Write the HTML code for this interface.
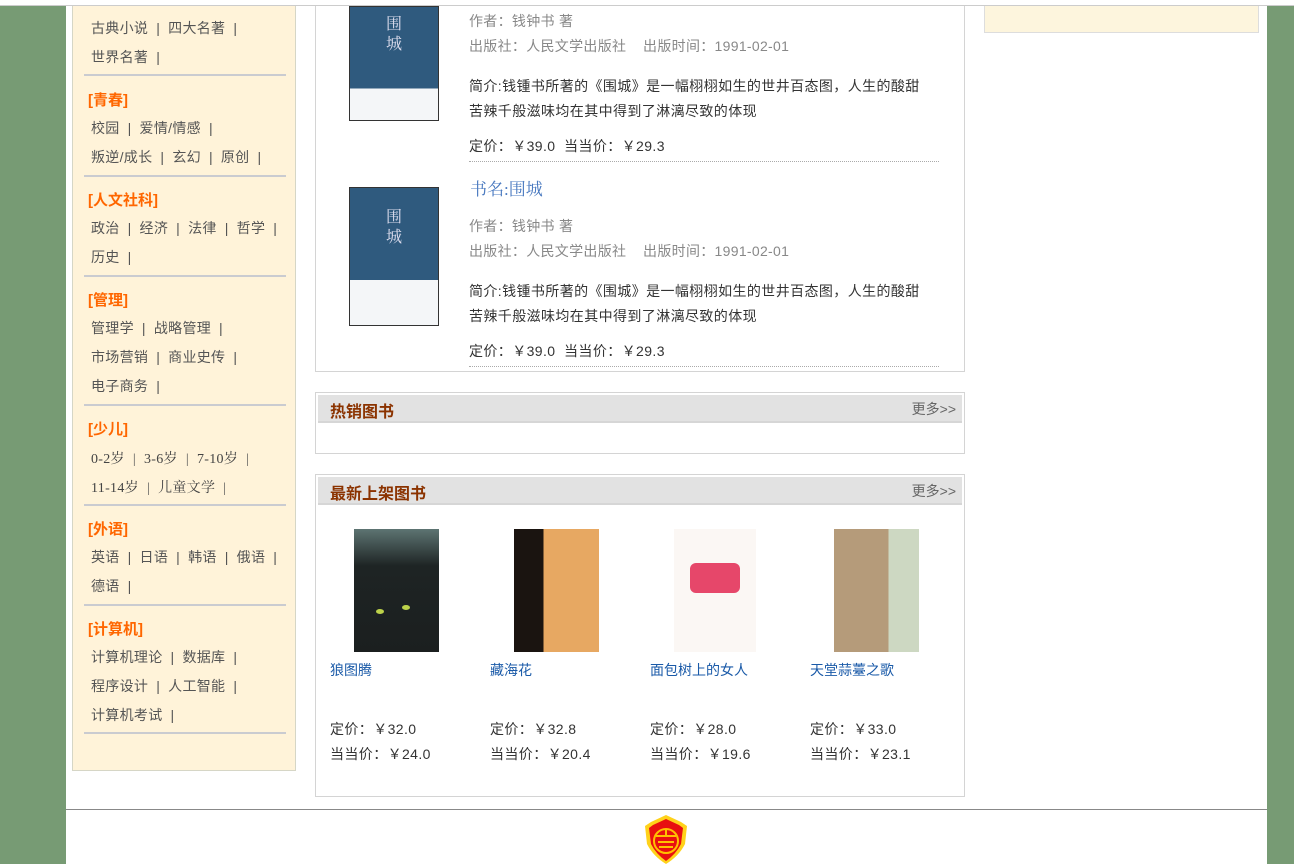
<!DOCTYPE html>
<html><head><meta charset="utf-8">
<style>
*{margin:0;padding:0;box-sizing:border-box}
body{width:1294px;height:864px;overflow:hidden;background:#779b74;font-family:"Liberation Sans","Noto Sans CJK SC",sans-serif;position:relative;font-size:14px;color:#333}
.a{position:absolute}
.topw{left:0;top:0;width:1294px;height:6px;background:#fff;border-bottom:1px solid #ccc}
.main{left:66px;top:5px;width:1201px;height:805px;background:#fff}
.side{left:72px;top:0;width:224px;height:771px;background:#fff3d9;border:1px solid #d6d6c6;border-top:none}
.sep{position:absolute;left:11px;width:202px;height:2px;background:#cacbd0}
.hd{position:absolute;left:15px;color:#f60;font-weight:bold;font-size:15px}
.ln{position:absolute;left:18px;color:#555;font-size:14px;white-space:nowrap;letter-spacing:0.3px}
.ln i{font-style:normal;color:#555;margin:0 8px}
.latin{font-family:"Liberation Serif","Noto Serif CJK SC",serif}
.box{border:1px solid #d4d4d4;background:#fff}
.bar{position:absolute;left:2px;right:2px;top:2px;height:28px;background:#e2e2e2;border-bottom:2px solid #d6d6d6}
.bar b{position:absolute;left:12px;top:3px;color:#8b3300;font-size:16px}
.bar span{position:absolute;right:6px;top:4px;color:#666;font-size:14px}
.cover{background:#2f5a7e;border:1px solid #333}
.g{color:#888;font-size:14px;letter-spacing:0.3px}
.p{font-size:14px;color:#333;letter-spacing:0.4px}
.blue{color:#1a5aa8}
</style></head><body>
<div class="a main"></div>
<div class="a topw"></div>
<div class="a side" style="top:6px;height:765px">
 <div class="ln" style="top:12px">古典小说<i>|</i>四大名著<i>|</i></div>
 <div class="ln" style="top:41px">世界名著<i>|</i></div>
 <div class="sep" style="top:68px"></div>
 <div class="hd" style="top:83px">[青春]</div>
 <div class="ln" style="top:112px">校园<i>|</i>爱情/情感<i>|</i></div>
 <div class="ln" style="top:141px">叛逆/成长<i>|</i>玄幻<i>|</i>原创<i>|</i></div>
 <div class="sep" style="top:169px"></div>
 <div class="hd" style="top:183px">[人文社科]</div>
 <div class="ln" style="top:212px">政治<i>|</i>经济<i>|</i>法律<i>|</i>哲学<i>|</i></div>
 <div class="ln" style="top:241px">历史<i>|</i></div>
 <div class="sep" style="top:269px"></div>
 <div class="hd" style="top:283px">[管理]</div>
 <div class="ln" style="top:312px">管理学<i>|</i>战略管理<i>|</i></div>
 <div class="ln" style="top:341px">市场营销<i>|</i>商业史传<i>|</i></div>
 <div class="ln" style="top:370px">电子商务<i>|</i></div>
 <div class="sep" style="top:398px"></div>
 <div class="hd" style="top:412px">[少儿]</div>
 <div class="ln latin" style="top:442px;color:#444">0-2岁<i>|</i>3-6岁<i>|</i>7-10岁<i>|</i></div>
 <div class="ln latin" style="top:471px;color:#444">11-14岁<i>|</i>儿童文学<i>|</i></div>
 <div class="sep" style="top:498px"></div>
 <div class="hd" style="top:512px">[外语]</div>
 <div class="ln" style="top:541px">英语<i>|</i>日语<i>|</i>韩语<i>|</i>俄语<i>|</i></div>
 <div class="ln" style="top:570px">德语<i>|</i></div>
 <div class="sep" style="top:598px"></div>
 <div class="hd" style="top:612px">[计算机]</div>
 <div class="ln" style="top:641px">计算机理论<i>|</i>数据库<i>|</i></div>
 <div class="ln" style="top:670px">程序设计<i>|</i>人工智能<i>|</i></div>
 <div class="ln" style="top:699px">计算机考试<i>|</i></div>
 <div class="sep" style="top:726px"></div>
</div>

<div class="a box" style="left:315px;top:6px;width:650px;height:366px;border-top:none"></div>
<div class="a cover" style="left:349px;top:6px;width:90px;height:115px;background:linear-gradient(#2f5a7e 0 72%,#f4f6f8 72%)"><span style="position:absolute;left:36px;top:6px;color:#dde;font-size:16px;line-height:20px;font-family:'Noto Serif CJK SC',serif">围<br>城</span></div>
<div class="a g" style="left:469px;top:11px">作者：钱钟书 著</div>
<div class="a g" style="left:469px;top:36px">出版社：人民文学出版社 &nbsp;&nbsp; 出版时间：1991-02-01</div>
<div class="a p" style="left:469px;top:74px;width:455px;line-height:25px">简介:钱锺书所著的《围城》是一幅栩栩如生的世井百态图，人生的酸甜苦辣千般滋味均在其中得到了淋漓尽致的体现</div>
<div class="a p" style="left:469px;top:136px">定价：￥39.0 &nbsp;当当价：￥29.3</div>
<div class="a" style="left:469px;top:161px;width:470px;border-top:1px dotted #aaa"></div>

<div class="a cover" style="left:349px;top:187px;width:90px;height:139px;background:linear-gradient(#2f5a7e 0 67%,#f4f6f8 67%)"><span style="position:absolute;left:36px;top:18px;color:#dde;font-size:16px;line-height:20px;font-family:'Noto Serif CJK SC',serif">围<br>城</span></div>
<div class="a" style="left:470px;top:175px;font-size:17px;color:#4a7ac0;font-family:'Liberation Serif','Noto Serif CJK SC',serif">书名:围城</div>
<div class="a g" style="left:469px;top:216px">作者：钱钟书 著</div>
<div class="a g" style="left:469px;top:241px">出版社：人民文学出版社 &nbsp;&nbsp; 出版时间：1991-02-01</div>
<div class="a p" style="left:469px;top:279px;width:455px;line-height:25px">简介:钱锺书所著的《围城》是一幅栩栩如生的世井百态图，人生的酸甜苦辣千般滋味均在其中得到了淋漓尽致的体现</div>
<div class="a p" style="left:469px;top:341px">定价：￥39.0 &nbsp;当当价：￥29.3</div>
<div class="a" style="left:469px;top:366px;width:470px;border-top:1px dotted #aaa"></div>

<div class="a box" style="left:315px;top:392px;width:650px;height:62px"><div class="bar"><b>热销图书</b><span>更多&gt;&gt;</span></div></div>
<div class="a box" style="left:315px;top:474px;width:650px;height:323px"><div class="bar"><b>最新上架图书</b><span>更多&gt;&gt;</span></div></div>

<div class="a" style="left:354px;top:529px;width:85px;height:123px;background:linear-gradient(#5d7472,#1e2424 30%,#1b1f1f)"><div style="position:absolute;left:22px;top:80px;width:8px;height:5px;border-radius:50%;background:#bcd24a"></div><div style="position:absolute;left:48px;top:76px;width:8px;height:5px;border-radius:50%;background:#bcd24a"></div></div>
<div class="a" style="left:514px;top:529px;width:85px;height:123px;background:linear-gradient(90deg,#1a1410 0 35%,#e7a862 35%)"></div>
<div class="a" style="left:674px;top:529px;width:82px;height:123px;background:#fbf7f4"><div style="position:absolute;left:16px;top:34px;width:50px;height:30px;background:#e6476a;border-radius:6px"></div></div>
<div class="a" style="left:834px;top:529px;width:85px;height:123px;background:linear-gradient(90deg,#b59b7a 0 64%,#cdd8c2 64%)"></div>

<div class="a blue" style="left:330px;top:660px">狼图腾</div>
<div class="a blue" style="left:490px;top:660px">藏海花</div>
<div class="a blue" style="left:650px;top:660px">面包树上的女人</div>
<div class="a blue" style="left:810px;top:660px">天堂蒜薹之歌</div>
<div class="a p" style="left:330px;top:717px;line-height:25px">定价：￥32.0<br>当当价：￥24.0</div>
<div class="a p" style="left:490px;top:717px;line-height:25px">定价：￥32.8<br>当当价：￥20.4</div>
<div class="a p" style="left:650px;top:717px;line-height:25px">定价：￥28.0<br>当当价：￥19.6</div>
<div class="a p" style="left:810px;top:717px;line-height:25px">定价：￥33.0<br>当当价：￥23.1</div>

<div class="a" style="left:984px;top:6px;width:275px;height:27px;background:#fdf5dd;border:1px solid #ddd;border-top:none"></div>

<div class="a" style="left:66px;top:809px;width:1201px;height:55px;background:#fff;border-top:1px solid #888"></div>
<svg class="a" style="left:643px;top:814px" width="46" height="50" viewBox="0 0 46 50">
<path d="M23 1 L38 8 L44 12 L42 30 Q36 42 23 50 Q10 42 4 30 L2 12 L8 8 Z" fill="#ffd21a"/>
<path d="M23 5 L36 11 L40 14 L38 30 Q33 40 23 47 Q13 40 8 30 L6 14 L10 11 Z" fill="#e81010"/>
<circle cx="23" cy="27" r="12" fill="none" stroke="#ffc000" stroke-width="2"/>
<path d="M13 22h20M23 16v6M15 28h16M16 33h14" stroke="#ffc000" stroke-width="2"/>
</svg>
</body></html>
